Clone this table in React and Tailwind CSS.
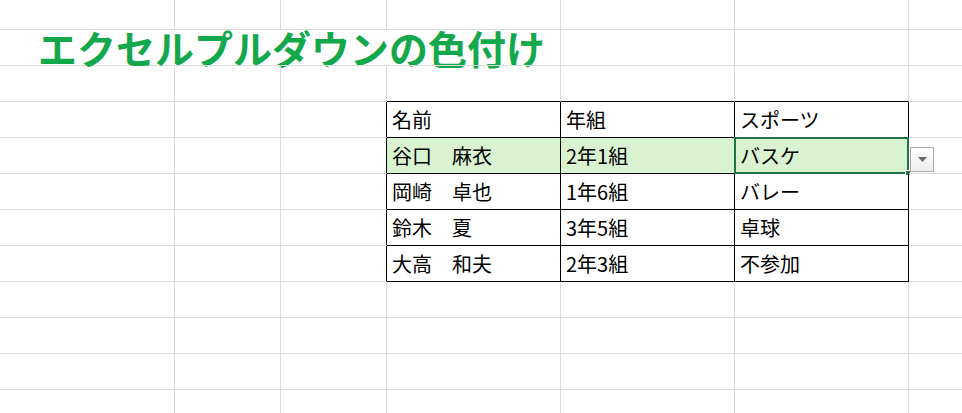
import React from 'react';

const colWidths = ['w-[175px]', 'w-[106px]', 'w-[106px]', 'w-[174px]', 'w-[174px]', 'w-[174px]', 'w-[174px]'];

const rows = [
  null,
  null,
  null,
  ['名前', '年組', 'スポーツ'],
  ['谷口　麻衣', '2年1組', 'バスケ'],
  ['岡崎　卓也', '1年6組', 'バレー'],
  ['鈴木　夏', '3年5組', '卓球'],
  ['大高　和夫', '2年3組', '不参加'],
  null,
  null,
  null,
  null,
];

const Cell = ({ r, c, children }) => {
  const inTableCol = c >= 3 && c <= 5;
  const rightBlack = c >= 2 && c <= 5 && r >= 3 && r <= 7;
  const bottomBlack = inTableCol && r >= 2 && r <= 7;
  const rightHidden = r === 1 && c <= 2;
  const filled = r === 4 && inTableCol;
  const selected = r === 4 && c === 5;

  return (
    <div
      className={[
        'relative shrink-0 flex items-center border-r border-b',
        colWidths[c],
        r === 0 ? 'h-[30px]' : 'h-[36px]',
        rightHidden ? 'border-r-transparent' : rightBlack ? 'border-r-black' : 'border-r-[#dadada]',
        bottomBlack ? 'border-b-black' : 'border-b-[#dadada]',
        filled ? 'bg-[#d9f2d0]' : '',
      ].join(' ')}
    >
      {children}
      {selected && (
        <>
          <div className="absolute left-[-1px] top-[-1px] w-[175px] h-[37px] border-2 border-[#217346] pointer-events-none">
            <div className="absolute right-[-4px] bottom-[-4px] w-[6px] h-[6px] bg-[#217346] border border-white" />
          </div>
          <div className="absolute left-[175px] top-[9px] w-[24px] h-[25px] border border-[#ababab] bg-gradient-to-b from-white to-[#eeeeee] flex items-center justify-center">
            <svg width="9" height="5" viewBox="0 0 9 5">
              <path d="M0 0 H9 L4.5 5 Z" fill="#6b6b6b" />
            </svg>
          </div>
        </>
      )}
    </div>
  );
};

const App = () => {
  return (
    <div className="w-[962px] h-[413px] overflow-hidden bg-white font-['Noto_Sans_CJK_JP',sans-serif] text-black">
      {rows.map((data, r) => (
        <div key={r} className="flex">
          {colWidths.map((_, c) => {
            let content = null;
            if (r === 1 && c === 0) {
              content = (
                <span className="pl-[38px] whitespace-nowrap text-[39px] font-bold leading-none text-[#13a84b]">
                  エクセルプルダウンの色付け
                </span>
              );
            } else if (data && c >= 3 && c <= 5) {
              content = (
                <span className="pl-[5px] whitespace-nowrap text-[20px] leading-none">{data[c - 3]}</span>
              );
            }
            return (
              <Cell key={c} r={r} c={c}>
                {content}
              </Cell>
            );
          })}
        </div>
      ))}
    </div>
  );
};

export default App;
